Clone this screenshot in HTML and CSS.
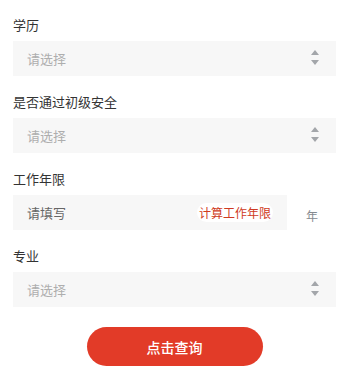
FILE: index.html
```html
<!DOCTYPE html>
<html lang="zh">
<head>
<meta charset="utf-8">
<link rel="stylesheet" href="styles.css">
</head>
<body>
<form class="form">
  <div class="group">
    <div class="label">学历</div>
    <div class="select">
      <span class="placeholder">请选择</span>
      <svg class="arrows" width="8" height="15" viewBox="0 0 8 15"><path d="M4 0 L8 5 L0 5 Z M0 10 L8 10 L4 15 Z" fill="#a3a6aa"/></svg>
    </div>
  </div>
  <div class="group">
    <div class="label">是否通过初级安全</div>
    <div class="select">
      <span class="placeholder">请选择</span>
      <svg class="arrows" width="8" height="15" viewBox="0 0 8 15"><path d="M4 0 L8 5 L0 5 Z M0 10 L8 10 L4 15 Z" fill="#a3a6aa"/></svg>
    </div>
  </div>
  <div class="group">
    <div class="label">工作年限</div>
    <div class="row">
      <div class="input">
        <span class="value">请填写</span>
        <span class="calc">计算工作年限</span>
      </div>
      <span class="unit">年</span>
    </div>
  </div>
  <div class="group">
    <div class="label">专业</div>
    <div class="select">
      <span class="placeholder">请选择</span>
      <svg class="arrows" width="8" height="15" viewBox="0 0 8 15"><path d="M4 0 L8 5 L0 5 Z M0 10 L8 10 L4 15 Z" fill="#a3a6aa"/></svg>
    </div>
  </div>
  <div class="actions">
    <button type="button" class="btn">点击查询</button>
  </div>
</form>
</body>
</html>
```

FILE: styles.css
```css
html, body {
  margin: 0;
  padding: 0;
  background: #ffffff;
}
body {
  font-family: "Noto Sans CJK SC", "Noto Sans", sans-serif;
  color: #333333;
}
.form {
  padding: 15px 13px 0 13px;
  display: flex;
  flex-direction: column;
  gap: 16px;
}
.label {
  font-size: 13px;
  line-height: 20px;
  height: 20px;
  color: #333333;
  margin-bottom: 6px;
}
.select, .input {
  height: 35px;
  background: #f7f7f7;
  display: flex;
  align-items: center;
  justify-content: space-between;
  padding: 0 17px 0 14px;
  box-sizing: border-box;
}
.input {
  padding-right: 14px;
  flex: 0 0 274px;
}
.placeholder {
  font-size: 13px;
  color: #aeaeae;
}
.value {
  font-size: 13px;
  color: #666666;
}
.arrows {
  display: block;
  margin-top: -2px;
}
.row {
  display: flex;
  align-items: center;
}
.calc {
  font-size: 12px;
  line-height: 19px;
  color: #cf3a22;
  background: #ffffff;
  border-radius: 10px;
  padding: 0 2px;
}
.unit {
  font-size: 12px;
  color: #858a90;
  margin-left: 19px;
  margin-top: 5px;
}
.actions {
  display: flex;
  justify-content: center;
  padding-top: 4px;
}
.btn {
  width: 176px;
  height: 39px;
  border: none;
  border-radius: 20px;
  background: #e23b28;
  color: #ffffff;
  font-family: "Noto Sans CJK SC", "Noto Sans", sans-serif;
  font-size: 14px;
  font-weight: 500;
  padding: 0;
}
```
